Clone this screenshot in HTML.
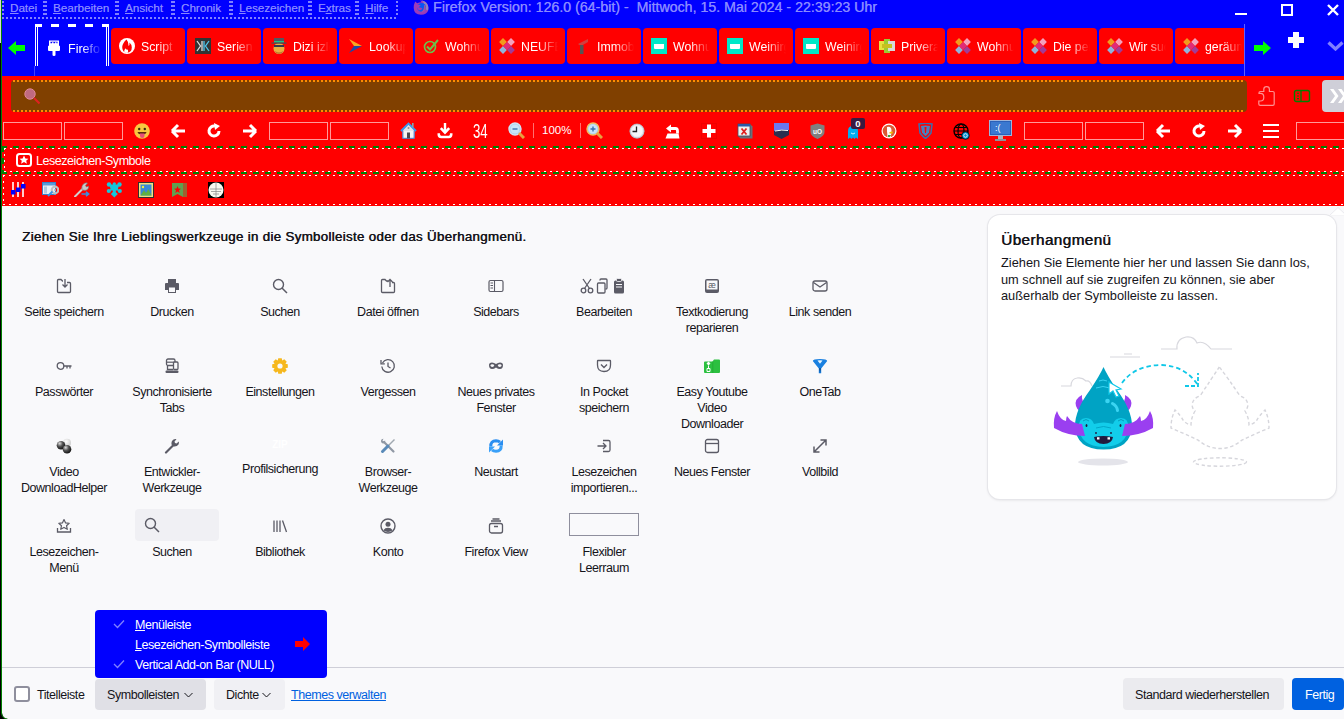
<!DOCTYPE html>
<html><head><meta charset="utf-8"><title>Anpassen</title>
<style>
*{box-sizing:border-box;margin:0;padding:0}
html,body{width:1344px;height:719px;overflow:hidden;background:#f9f9fb;font-family:"Liberation Sans",sans-serif;position:relative}
.a{position:absolute}
svg{display:block}
.mi{top:1px;font-size:11.6px;color:#8888ff;white-space:nowrap;text-shadow:0.25px 0 0 rgba(136,136,255,0.7)}
#title{left:433px;top:-1px;font-size:14.2px;color:#8a8aff;white-space:nowrap;text-shadow:0.35px 0 0 rgba(138,138,255,0.8)}
.tab{position:absolute;top:28px;height:36px;background:#ff0000;overflow:hidden}
.tab .t{position:absolute;left:30px;top:12px;font-size:12.3px;color:#fff;white-space:nowrap;width:38px;overflow:hidden;-webkit-mask-image:linear-gradient(to right,#000 0,#000 17px,rgba(0,0,0,0) 37px)}
.tab .ic{position:absolute;left:8px;top:10px;width:16px;height:16px}
.lbl{position:absolute;width:108px;text-align:center;font-size:12.5px;letter-spacing:-0.45px;line-height:16px;color:#15141a}
.ui{font-size:12.5px;letter-spacing:-0.45px;white-space:nowrap}
</style></head><body>
<div class="a" style="left:0;top:0;width:1344px;height:76px;background:#0000ff"></div>
<div class="a" style="left:0;top:76px;width:1344px;height:130px;background:#ff0000"></div>
<div class="a" style="left:2px;top:17px;width:396px;height:2px;background-image:linear-gradient(to right,#8080ff 2px,transparent 2px);background-size:4px 2px"></div>
<div class="a" style="left:2px;top:1px;width:2px;height:16px;background-image:linear-gradient(to bottom,#8080ff 2px,transparent 2px);background-size:2px 4px"></div>
<div class="a" style="left:43px;top:1px;width:4px;height:16px;background-image:linear-gradient(to bottom,#8080ff 2px,transparent 2px);background-size:4px 4px"></div>
<div class="a" style="left:115px;top:1px;width:4px;height:16px;background-image:linear-gradient(to bottom,#8080ff 2px,transparent 2px);background-size:4px 4px"></div>
<div class="a" style="left:171px;top:1px;width:4px;height:16px;background-image:linear-gradient(to bottom,#8080ff 2px,transparent 2px);background-size:4px 4px"></div>
<div class="a" style="left:229px;top:1px;width:4px;height:16px;background-image:linear-gradient(to bottom,#8080ff 2px,transparent 2px);background-size:4px 4px"></div>
<div class="a" style="left:308px;top:1px;width:4px;height:16px;background-image:linear-gradient(to bottom,#8080ff 2px,transparent 2px);background-size:4px 4px"></div>
<div class="a" style="left:355px;top:1px;width:4px;height:16px;background-image:linear-gradient(to bottom,#8080ff 2px,transparent 2px);background-size:4px 4px"></div>
<div class="a" style="left:396px;top:1px;width:2px;height:16px;background-image:linear-gradient(to bottom,#8080ff 2px,transparent 2px);background-size:2px 4px"></div>
<div class="a mi" style="left:10px"><u>D</u>atei</div>
<div class="a mi" style="left:53px"><u>B</u>earbeiten</div>
<div class="a mi" style="left:125px"><u>A</u>nsicht</div>
<div class="a mi" style="left:181px"><u>C</u>hronik</div>
<div class="a mi" style="left:239px"><u>L</u>esezeichen</div>
<div class="a mi" style="left:318px">E<u>x</u>tras</div>
<div class="a mi" style="left:365px"><u>H</u>ilfe</div>
<svg class="a" style="left:413px;top:0px" width="16" height="16" viewBox="0 0 16 16">
<path d="M2.2 1.5L4.2 3.2Q6 2.2 8.5 2.2L7.2 0.5Q12.5 0.5 14.5 4.5Q16 7.5 15.3 10Q14 14.8 8 14.8Q1 14.8 0.7 8Q0.6 4.5 2.2 1.5Z" fill="#9c3cb8"/>
<path d="M9 0.5Q13.5 1.5 15 5.5Q15.8 8 15 10.5L12 9Q12.5 5 9 0.5Z" fill="#9484bc"/>
<circle cx="8.6" cy="7.4" r="4.4" fill="#0656f8"/>
<path d="M3.8 5Q6.2 4 7.8 5.8Q6 6.2 5.6 7.6Q8 7 9.5 8.6Q8.5 10.5 6 10.2Q4 9.5 3.8 5Z" fill="#a03cb4"/>
<path d="M11 4.5Q13.5 6.5 12.5 10Q11 12.5 8 12.2Q11.5 10.5 11 4.5Z" fill="#a050a8"/>
</svg>
<div class="a" id="title">Firefox Version: 126.0 (64-bit) -&nbsp; Mittwoch, 15. Mai 2024 - 22:39:23 Uhr</div>
<div class="a" style="left:1235px;top:13px;width:12px;height:2px;background:#fff"></div>
<div class="a" style="left:1281px;top:4px;width:12px;height:12px;border:2px solid #fff"></div>
<svg class="a" style="left:1327px;top:4px" width="12" height="12" viewBox="0 0 12 12"><path d="M1 1L11 11M11 1L1 11" stroke="#fff" stroke-width="2.4"/></svg>
<div class="a" style="left:35px;top:24px;width:1px;height:42px;background:#fff"></div>
<div class="a" style="left:37px;top:27px;width:1px;height:39px;background:#fff"></div>
<div class="a" style="left:108px;top:24px;width:1px;height:42px;background:#fff"></div>
<div class="a" style="left:106px;top:27px;width:1px;height:39px;background:#fff"></div>
<div class="a" style="left:35px;top:24px;width:7px;height:3px;background:#fff"></div>
<div class="a" style="left:51px;top:24px;width:8px;height:3px;background:#fff"></div>
<div class="a" style="left:68px;top:24px;width:8px;height:3px;background:#fff"></div>
<div class="a" style="left:85px;top:24px;width:8px;height:3px;background:#fff"></div>
<div class="a" style="left:102px;top:24px;width:7px;height:3px;background:#fff"></div>
<div class="a" style="left:34px;top:66px;width:1px;height:10px;background:#4040ff"></div>
<svg class="a" style="left:48px;top:40px" width="12" height="16" viewBox="0 0 12 16"><path d="M1 0.5H11V6H1Z M1 5.5H11Q12 5.5 12 6.5V10Q12 11 11 11H1Q0 11 0 10V6.5Q0 5.5 1 5.5Z M4.5 11H7.5V15Q7.5 16 6 16Q4.5 16 4.5 15Z" fill="#fff"/><path d="M2.5 1.8V3.2H4V2.2H5.5V3.2H7V2.2H8.5V3.2H9.5V1.8" fill="#0000ff"/></svg>
<div class="a" style="left:68px;top:42px;font-size:12.5px;color:#fff;white-space:nowrap;width:32px;overflow:hidden;-webkit-mask-image:linear-gradient(to right,#000 0,#000 14px,rgba(0,0,0,0.1) 32px)">Firefox Version</div>
<div class="tab" style="left:111px;width:74px;border-radius:4px"><div class="ic"><svg width="16" height="16" viewBox="0 0 16 16"><circle cx="8" cy="8" r="8" fill="#fff"/><path d="M7.5 1.5Q3.5 5 3.2 9Q3.2 14.5 8 14.8Q12.8 14.5 12.8 9.5Q12.8 6.5 10.5 4.5Q10.8 7 9.6 8Q9.8 4 7.5 1.5Z" fill="#ff0000"/><path d="M5.2 14.5Q4.8 11.5 6.8 10.2Q6.8 12 8.8 11.6Q9.6 13.5 8.5 15Z" fill="#fff"/></svg></div><div class="t">Script</div></div>
<div class="tab" style="left:187px;width:74px;border-radius:4px"><div class="ic"><svg width="16" height="16" viewBox="0 0 16 16"><rect width="16" height="16" fill="#333"/><path d="M7 3V13M2 3L5.5 8L2 13" stroke="#ddd" stroke-width="1.3" fill="none"/><path d="M9 3V13M14 3L10.5 8L14 13" stroke="#4ec8ee" stroke-width="1.3" fill="none"/></svg></div><div class="t">Serien</div></div>
<div class="tab" style="left:263px;width:74px;border-radius:4px"><div class="ic"><svg width="16" height="16" viewBox="0 0 16 16"><ellipse cx="8" cy="10.5" rx="5.5" ry="5.5" fill="#e8b040"/><path d="M4 13Q8 16 12 13Q11 15.8 8 15.8Q5 15.8 4 13Z" fill="#b07030"/><rect x="3" y="0" width="10" height="4.5" fill="#505860"/><rect x="3" y="3" width="10" height="1.6" fill="#20c08a"/><rect x="0.5" y="4.5" width="15" height="1.2" fill="#405058"/><rect x="3" y="7" width="10" height="2" fill="#303850"/></svg></div><div class="t">Dizi izle</div></div>
<div class="tab" style="left:339px;width:74px;border-radius:4px"><div class="ic"><svg width="16" height="16" viewBox="0 0 16 16"><path d="M2 1L15 8L7 8Z" fill="#f7a823"/><path d="M7 8L15 8L2 15Z" fill="#1e4aa8"/><path d="M2 1L7 8L2 15" fill="#f2c94c" opacity="0"/></svg></div><div class="t">Lookup</div></div>
<div class="tab" style="left:415px;width:74px;border-radius:4px"><div class="ic"><svg width="16" height="16" viewBox="0 0 16 16"><circle cx="7" cy="9" r="5.5" stroke="#6cc04a" stroke-width="1.6" fill="none"/><path d="M4 8.5L7 11.5L15 2" stroke="#6cc04a" stroke-width="2" fill="none"/></svg></div><div class="t">Wohnung</div></div>
<div class="tab" style="left:491px;width:74px;border-radius:4px"><div class="ic"><svg width="16" height="16" viewBox="0 0 16 16"><path d="M4 0.10000000000000009L7.9 4L4 7.9L0.10000000000000009 4Z" fill="#f29a1d"/><path d="M12 0.10000000000000009L15.9 4L12 7.9L8.1 4Z" fill="#f4a0bc"/><path d="M4 8.1L7.9 12L4 15.9L0.10000000000000009 12Z" fill="#90b4dc"/><path d="M12 8.1L15.9 12L12 15.9L8.1 12Z" fill="#a03c98"/><path d="M8 4.1L11.9 8L8 11.9L4.1 8Z" fill="#e02a78"/></svg></div><div class="t">NEUFERT</div></div>
<div class="tab" style="left:567px;width:74px;border-radius:4px"><div class="ic"><svg width="16" height="16" viewBox="0 0 16 16"><path d="M3 6L13 1V4L6 8Z" fill="#d04040"/><rect x="5" y="7" width="3.5" height="9" fill="#555"/></svg></div><div class="t">Immobilien</div></div>
<div class="tab" style="left:643px;width:74px;border-radius:4px"><div class="ic"><svg width="16" height="16" viewBox="0 0 16 16"><rect width="16" height="16" fill="#00e8c8"/><path d="M3 6H13V10Q13 11 12 11H4Q3 11 3 10Z" fill="#fff"/></svg></div><div class="t">Wohnung</div></div>
<div class="tab" style="left:719px;width:74px;border-radius:4px"><div class="ic"><svg width="16" height="16" viewBox="0 0 16 16"><rect width="16" height="16" fill="#00e8c8"/><path d="M3 6H13V10Q13 11 12 11H4Q3 11 3 10Z" fill="#fff"/></svg></div><div class="t">Weinirgendwas</div></div>
<div class="tab" style="left:795px;width:74px;border-radius:4px"><div class="ic"><svg width="16" height="16" viewBox="0 0 16 16"><rect width="16" height="16" fill="#00e8c8"/><path d="M3 6H13V10Q13 11 12 11H4Q3 11 3 10Z" fill="#fff"/></svg></div><div class="t">Weinirgendwas</div></div>
<div class="tab" style="left:871px;width:74px;border-radius:4px"><div class="ic"><svg width="16" height="16" viewBox="0 0 16 16"><rect x="0" y="3" width="6" height="9" fill="#e8e040"/><rect x="5" y="1" width="6" height="14" fill="#9acd32"/><rect x="9" y="3" width="7" height="10" fill="#d8d8d8"/><rect x="3" y="6" width="10" height="4" fill="#c8c020"/></svg></div><div class="t">Privera</div></div>
<div class="tab" style="left:947px;width:74px;border-radius:4px"><div class="ic"><svg width="16" height="16" viewBox="0 0 16 16"><path d="M4 0.10000000000000009L7.9 4L4 7.9L0.10000000000000009 4Z" fill="#f29a1d"/><path d="M12 0.10000000000000009L15.9 4L12 7.9L8.1 4Z" fill="#f4a0bc"/><path d="M4 8.1L7.9 12L4 15.9L0.10000000000000009 12Z" fill="#90b4dc"/><path d="M12 8.1L15.9 12L12 15.9L8.1 12Z" fill="#a03c98"/><path d="M8 4.1L11.9 8L8 11.9L4.1 8Z" fill="#e02a78"/></svg></div><div class="t">Wohnung</div></div>
<div class="tab" style="left:1023px;width:74px;border-radius:4px"><div class="ic"><svg width="16" height="16" viewBox="0 0 16 16"><path d="M4 0.10000000000000009L7.9 4L4 7.9L0.10000000000000009 4Z" fill="#f29a1d"/><path d="M12 0.10000000000000009L15.9 4L12 7.9L8.1 4Z" fill="#f4a0bc"/><path d="M4 8.1L7.9 12L4 15.9L0.10000000000000009 12Z" fill="#90b4dc"/><path d="M12 8.1L15.9 12L12 15.9L8.1 12Z" fill="#a03c98"/><path d="M8 4.1L11.9 8L8 11.9L4.1 8Z" fill="#e02a78"/></svg></div><div class="t">Die perfekte</div></div>
<div class="tab" style="left:1099px;width:74px;border-radius:4px"><div class="ic"><svg width="16" height="16" viewBox="0 0 16 16"><path d="M4 0.10000000000000009L7.9 4L4 7.9L0.10000000000000009 4Z" fill="#f29a1d"/><path d="M12 0.10000000000000009L15.9 4L12 7.9L8.1 4Z" fill="#f4a0bc"/><path d="M4 8.1L7.9 12L4 15.9L0.10000000000000009 12Z" fill="#90b4dc"/><path d="M12 8.1L15.9 12L12 15.9L8.1 12Z" fill="#a03c98"/><path d="M8 4.1L11.9 8L8 11.9L4.1 8Z" fill="#e02a78"/></svg></div><div class="t">Wir suchen</div></div>
<div class="tab" style="left:1175px;width:69px;border-radius:4px 0 0 4px"><div class="ic"><svg width="16" height="16" viewBox="0 0 16 16"><path d="M4 0.10000000000000009L7.9 4L4 7.9L0.10000000000000009 4Z" fill="#f29a1d"/><path d="M12 0.10000000000000009L15.9 4L12 7.9L8.1 4Z" fill="#f4a0bc"/><path d="M4 8.1L7.9 12L4 15.9L0.10000000000000009 12Z" fill="#90b4dc"/><path d="M12 8.1L15.9 12L12 15.9L8.1 12Z" fill="#a03c98"/><path d="M8 4.1L11.9 8L8 11.9L4.1 8Z" fill="#e02a78"/></svg></div><div class="t">geräumig</div></div>
<div class="a" style="left:1244px;top:24px;width:1px;height:52px;background:#6060ff"></div>
<svg class="a" style="left:8px;top:41px" width="17" height="14" viewBox="0 0 17 14"><path d="M0 7L8 0V4H17V10H8V14Z" fill="#00ff00"/></svg>
<svg class="a" style="left:1254px;top:41px" width="17" height="14" viewBox="0 0 17 14"><path d="M17 7L9 0V4H0V10H9V14Z" fill="#00ff00"/></svg>
<svg class="a" style="left:1288px;top:32px" width="16" height="16" viewBox="0 0 16 16"><path d="M5 0H11V5H16V11H11V16H5V11H0V5H5Z" fill="#fff"/></svg>
<svg class="a" style="left:1327px;top:41px" width="17" height="10" viewBox="0 0 17 10"><path d="M1.5 1.5L8.5 8L15.5 1.5" stroke="#8080ff" stroke-width="3.2" fill="none"/></svg>
<div class="a" style="left:11px;top:80px;width:1236px;height:32px;background:#804000;border-radius:4px"></div>
<div class="a" style="left:13px;top:80px;width:1232px;height:2px;background-image:linear-gradient(to right,#ff8c00 2px,transparent 2px);background-size:4px 2px"></div>
<div class="a" style="left:13px;top:110px;width:1232px;height:2px;background-image:linear-gradient(to right,#ff8c00 2px,transparent 2px);background-size:4px 2px"></div>
<svg class="a" style="left:24px;top:88px" width="17" height="17" viewBox="0 0 17 17"><circle cx="6" cy="6" r="5.2" fill="#c06a80" stroke="#e08898" stroke-width="1"/><path d="M10 10L15.5 15.5" stroke="#e02020" stroke-width="2"/></svg>
<svg class="a" style="left:1258px;top:86px" width="17" height="20" viewBox="0 0 17 20"><path d="M1 6.8Q1 5.5 2.3 5.5H5.8V3.2Q5.8 0.6 8.6 0.6Q11.4 0.6 11.4 3.2V5.5H14.8Q16.2 5.5 16.2 6.8V18Q16.2 19.3 14.8 19.3H2.2Q0.8 19.3 0.8 18V15H2.5Q5.8 15 5.8 11.2Q5.8 7.4 2.5 7.4H1Z" stroke="#ff9090" stroke-width="1.2" fill="none"/></svg>
<svg class="a" style="left:1293px;top:89px" width="18" height="14" viewBox="0 0 18 14"><rect x="1.5" y="1.5" width="15" height="11" rx="1.8" stroke="#008000" stroke-width="1.4" fill="none"/><path d="M8 1.5V12.5" stroke="#008000" stroke-width="1.3"/><path d="M4 4.3H6M4 7H6M4 9.6H6" stroke="#008000" stroke-width="1.1"/></svg>
<div class="a" style="left:1322px;top:80px;width:30px;height:32px;background:#cfcfd8;border-radius:4px"></div>
<svg class="a" style="left:1329px;top:88px" width="15" height="16" viewBox="0 0 15 16"><path d="M1 1H4.5L9.5 8L4.5 15H1L6 8Z M9 1H12.5L17.5 8L12.5 15H9L14 8Z" fill="#fff"/></svg>
<div class="a" style="left:3px;top:122px;width:59px;height:18px;border:1px solid #ff9a9a"></div>
<div class="a" style="left:64px;top:122px;width:59px;height:18px;border:1px solid #ff9a9a"></div>
<div class="a" style="left:269px;top:122px;width:59px;height:18px;border:1px solid #ff9a9a"></div>
<div class="a" style="left:330px;top:122px;width:59px;height:18px;border:1px solid #ff9a9a"></div>
<div class="a" style="left:1024px;top:122px;width:59px;height:18px;border:1px solid #ff9a9a"></div>
<div class="a" style="left:1085px;top:122px;width:59px;height:18px;border:1px solid #ff9a9a"></div>
<div class="a" style="left:1296px;top:122px;width:59px;height:18px;border:1px solid #ff9a9a"></div>
<svg class="a" style="left:170px;top:123px" width="16" height="16" viewBox="0 0 16 16"><path d="M2 8L8 2M2 8L8 14M2 8H15" stroke="#fff" stroke-width="3" fill="none" stroke-linejoin="miter"/></svg>
<svg class="a" style="left:1155px;top:123px" width="16" height="16" viewBox="0 0 16 16"><path d="M2 8L8 2M2 8L8 14M2 8H15" stroke="#fff" stroke-width="3" fill="none" stroke-linejoin="miter"/></svg>
<svg class="a" style="left:206px;top:123px" width="16" height="16" viewBox="0 0 16 16"><path d="M13 8A5 5 0 1 1 9 3.1" stroke="#fff" stroke-width="3" fill="none"/><path d="M8 0L14 3L9 7Z" fill="#fff"/></svg>
<svg class="a" style="left:1191px;top:123px" width="16" height="16" viewBox="0 0 16 16"><path d="M13 8A5 5 0 1 1 9 3.1" stroke="#fff" stroke-width="3" fill="none"/><path d="M8 0L14 3L9 7Z" fill="#fff"/></svg>
<svg class="a" style="left:242px;top:123px" width="16" height="16" viewBox="0 0 16 16"><path d="M14 8L8 2M14 8L8 14M14 8H1" stroke="#fff" stroke-width="3" fill="none"/></svg>
<svg class="a" style="left:1227px;top:123px" width="16" height="16" viewBox="0 0 16 16"><path d="M14 8L8 2M14 8L8 14M14 8H1" stroke="#fff" stroke-width="3" fill="none"/></svg>
<svg class="a" style="left:134px;top:123px" width="16" height="16" viewBox="0 0 16 16"><circle cx="8" cy="8" r="7.8" fill="#f8c840"/><circle cx="5.2" cy="6" r="1.2" fill="#3a2a10"/><circle cx="10.8" cy="6" r="1.2" fill="#3a2a10"/><path d="M3.5 9H12.5Q12 11.5 8 11.5Q4 11.5 3.5 9Z" fill="#5a2a10"/><path d="M6 10.5H10.5V13Q10.5 15 8.2 15Q6 15 6 13Z" fill="#e85078"/></svg>
<svg class="a" style="left:400px;top:122px" width="17" height="17" viewBox="0 0 17 17"><path d="M2.5 8L8.5 2L14.5 8V16.5H2.5Z" fill="#e4e4e6"/><path d="M4 9H13V16H4Z" fill="#f4f4f4"/><path d="M1 9L8.5 1.5L16 9" stroke="#3898f0" stroke-width="1.8" fill="none"/><path d="M2.8 8.5V16.3H14.2V8.5" stroke="#2a80e0" stroke-width="0.9" fill="none"/><rect x="7" y="10.5" width="3" height="5.8" fill="#4a4a4e"/><rect x="12" y="1" width="1.6" height="4.5" fill="#80a8b0"/><circle cx="8.5" cy="6" r="1" fill="#909090"/></svg>
<svg class="a" style="left:437px;top:122px" width="16" height="17" viewBox="0 0 16 17"><path d="M8 1V10.5" stroke="#fff" stroke-width="2.4"/><path d="M3.8 6.2L8 10.6L12.2 6.2" stroke="#fff" stroke-width="2.6" fill="none"/><path d="M1.8 11.2V12.6Q1.8 15 4.2 15H11.8Q14.2 15 14.2 12.6V11.2" stroke="#fff" stroke-width="2.6" fill="none"/></svg>
<div class="a" style="left:473px;top:120px;font-size:20px;color:#fff;white-space:nowrap;transform:scaleX(0.66);transform-origin:0 0;line-height:22px">34</div>
<svg class="a" style="left:508px;top:122px" width="17" height="17" viewBox="0 0 17 17"><circle cx="7" cy="7" r="6" fill="#a8d0f0" stroke="#d0e4f4" stroke-width="1.4"/><circle cx="7" cy="7" r="4.5" fill="#c8e4f8"/><path d="M11 11L16 16" stroke="#e8a040" stroke-width="3"/><path d="M4.5 7H9.5" stroke="#3a70b0" stroke-width="1.4"/></svg>
<svg class="a" style="left:586px;top:122px" width="17" height="17" viewBox="0 0 17 17"><circle cx="7" cy="7" r="6" fill="#a8d0f0" stroke="#f0c060" stroke-width="1.4"/><circle cx="7" cy="7" r="4.5" fill="#c8e4f8"/><path d="M11 11L16 16" stroke="#e8a040" stroke-width="3"/><path d="M4.5 7H9.5M7 4.5V9.5" stroke="#3a70b0" stroke-width="1.4"/></svg>
<div class="a" style="left:533px;top:123px;width:1px;height:15px;background:#ff7070"></div>
<div class="a" style="left:580px;top:123px;width:1px;height:15px;background:#ff7070"></div>
<div class="a" style="left:542px;top:124px;font-size:11.5px;color:#fff;white-space:nowrap">100%</div>
<svg class="a" style="left:629px;top:123px" width="16" height="16" viewBox="0 0 16 16"><circle cx="8" cy="8.3" r="7.3" fill="#a0a0a8"/><circle cx="8" cy="8" r="7" fill="#e4e6ec" stroke="#b8bcc8" stroke-width="0.8"/><circle cx="8" cy="8" r="5.5" fill="#f4f6fa"/><path d="M7.5 3.5V8.5H3.5" stroke="#222" stroke-width="1.3" fill="none"/></svg>
<svg class="a" style="left:665px;top:123px" width="15" height="16" viewBox="0 0 15 16"><path d="M5 5.5H10.5Q12.5 5.5 12.5 8V10.5" stroke="#fff" stroke-width="2.8" fill="none"/><path d="M1 5.5L6 1.5V9.5Z" fill="#fff"/><path d="M2.5 10.5H13.5L14.5 15.5H0.5Z" fill="#fff"/></svg>
<svg class="a" style="left:701px;top:123px" width="16" height="16" viewBox="0 0 16 16"><rect x="0.5" y="0.5" width="15" height="15" fill="none" stroke="#c80000" stroke-opacity="0.6" stroke-width="1" stroke-dasharray="1 1"/><path d="M6 1.5H10V6H14.5V10H10V14.5H6V10H1.5V6H6Z" fill="#fff"/></svg>
<svg class="a" style="left:737px;top:123px" width="16" height="16" viewBox="0 0 16 16"><path d="M13 1L15.5 3.5V15.5H3.5L1 13Z" fill="#6a7078"/><rect x="1" y="1" width="12" height="12" fill="#f0f0f0" stroke="#404a60" stroke-width="0.8"/><rect x="1" y="1" width="12" height="2.5" fill="#2a5aa8"/><path d="M4.5 5.5L9.5 11.5M9.5 5.5L4.5 11.5" stroke="#e02020" stroke-width="1.8"/></svg>
<svg class="a" style="left:774px;top:123px" width="15" height="16" viewBox="0 0 15 16"><path d="M0 0H15V12L7.5 16L0 12Z" fill="#2a3050"/><path d="M0 0H15V7Q7 6 0 8Z" fill="#6a78f0"/><path d="M1 8Q8 6.5 14 7.5" stroke="#fff" stroke-width="1"/></svg>
<svg class="a" style="left:810px;top:123px" width="15" height="16" viewBox="0 0 15 16"><path d="M7.5 0.5L14.5 2.5V9Q14.5 13 7.5 16Q0.5 13 0.5 9V2.5Z" fill="#808080"/><text x="7.5" y="10.5" font-size="6.5" font-weight="bold" fill="#fff" text-anchor="middle" font-family="Liberation Sans">uO</text></svg>
<svg class="a" style="left:846px;top:125px" width="14" height="14" viewBox="0 0 14 14"><path d="M2 14V6Q2 1 7 1Q12 1 12 6V14L10 12.5L8.5 14L7 12.5L5.5 14L4 12.5Z" fill="#00aef0"/><path d="M5 8Q7 10 9 8" stroke="#fff" stroke-width="0.8" fill="none"/></svg>
<div class="a" style="left:851px;top:118px;width:14px;height:11px;background:#3a1a40;border-radius:2px;color:#fff;font-size:9.5px;font-weight:bold;text-align:center;line-height:11px">0</div>
<svg class="a" style="left:881px;top:123px" width="16" height="16" viewBox="0 0 16 16"><circle cx="8" cy="8" r="7.5" fill="#fff"/><circle cx="8" cy="8" r="6.3" fill="#de5833"/><path d="M6 4Q10 3 10.5 7L10 14Q8 15 6.5 14L6 8Z" fill="#fff"/><path d="M8.5 9L12 8.5L11.5 10.5L8.5 10.5Z" fill="#f0c000"/><path d="M7 12L10 12L9 14L7 14Z" fill="#40a040"/></svg>
<svg class="a" style="left:918px;top:123px" width="15" height="16" viewBox="0 0 15 16"><path d="M1 1Q7.5 -0.5 14 1L13 10Q10 14 7.5 15.5Q5 14 2 10Z" fill="none" stroke="#3a70b0" stroke-width="1.5"/><path d="M3 3Q7.5 2 12 3L11 9.5Q9 12 7.5 13Q6 12 4 9.5Z" fill="#4a80c0"/><path d="M6.5 4H8.5L8 10H7Z" fill="#ff0000"/></svg>
<svg class="a" style="left:953px;top:123px" width="17" height="17" viewBox="0 0 17 17"><circle cx="8" cy="8" r="7" fill="none" stroke="#000" stroke-width="1.4"/><ellipse cx="8" cy="8" rx="3" ry="7" fill="none" stroke="#000" stroke-width="1.2"/><path d="M1 8H15M2.5 4.5H13.5M2.5 11.5H13.5" stroke="#000" stroke-width="1.1"/><circle cx="12.5" cy="12.5" r="3.8" fill="#0090d0" stroke="#000" stroke-width="0.8"/><circle cx="12.5" cy="12.5" r="1.8" fill="none" stroke="#fff" stroke-width="0.8"/></svg>
<svg class="a" style="left:989px;top:120px" width="23" height="22" viewBox="0 0 23 22"><rect x="0.5" y="0.5" width="22" height="15" fill="#2a60b8" stroke="#a0b4d8" stroke-width="1"/><rect x="2" y="2" width="19" height="12" fill="#3a78d0"/><text x="6" y="11" font-size="9" fill="#fff" font-family="Liberation Sans">:(</text><rect x="9" y="16" width="5" height="3" fill="#b0b0b8"/><rect x="6" y="19" width="11" height="2" fill="#909098"/></svg>
<svg class="a" style="left:1263px;top:123px" width="16" height="16" viewBox="0 0 16 16"><path d="M0 2H16M0 8H16M0 14H16" stroke="#fff" stroke-width="2.2"/></svg>
<div class="a" style="left:1px;top:146px;width:1343px;height:2px;background-image:linear-gradient(to right,#008000 6px,transparent 6px);background-size:12px 2px"></div>
<div class="a" style="left:4px;top:148px;width:1340px;height:1px;background-image:linear-gradient(to right,#fff 2px,transparent 2px);background-size:6px 1px"></div>
<div class="a" style="left:4px;top:171px;width:1340px;height:1px;background-image:linear-gradient(to right,#fff 2px,transparent 2px);background-size:6px 1px"></div>
<div class="a" style="left:1px;top:172px;width:1343px;height:2px;background-image:linear-gradient(to right,#008000 6px,transparent 6px);background-size:12px 2px"></div>
<div class="a" style="left:2px;top:146px;width:2px;height:28px;background-image:linear-gradient(to bottom,#008000 6px,transparent 6px);background-size:2px 12px"></div>
<div class="a" style="left:4px;top:148px;width:1px;height:24px;background-image:linear-gradient(to bottom,#fff 2px,transparent 2px);background-size:1px 6px"></div>
<svg class="a" style="left:16px;top:153px" width="16" height="14" viewBox="0 0 16 14"><rect x="1" y="1" width="14" height="12" rx="2.5" fill="none" stroke="#fff" stroke-width="2"/><path d="M8 2.6L9.4 5.4L12.4 5.7L10.2 7.7L10.9 10.7L8 9.1L5.1 10.7L5.8 7.7L3.6 5.7L6.6 5.4Z" fill="#fff"/></svg>
<div class="a" style="left:36px;top:154px;font-size:12.5px;letter-spacing:-0.45px;color:#fff;white-space:nowrap">Lesezeichen-Symbole</div>
<div class="a" style="left:3px;top:175px;width:1341px;height:1px;background-image:linear-gradient(to right,#fff 2px,transparent 2px);background-size:6px 1px"></div>
<div class="a" style="left:3px;top:204px;width:1341px;height:1px;background-image:linear-gradient(to right,#fff 2px,transparent 2px);background-size:6px 1px"></div>
<div class="a" style="left:3px;top:175px;width:1px;height:30px;background-image:linear-gradient(to bottom,#fff 2px,transparent 2px);background-size:1px 6px"></div>
<svg class="a" style="left:11px;top:182px" width="15" height="15" viewBox="0 0 15 15"><path d="M2 0V15M7 0V15M12 0V15" stroke="#fff" stroke-width="1.6"/><rect x="0" y="8" width="4.5" height="4.5" fill="#0000ff"/><rect x="5" y="5.5" width="4.5" height="4.5" fill="#0000ff"/><rect x="10" y="2" width="4.5" height="4.5" fill="#0000ff"/></svg>
<svg class="a" style="left:42px;top:182px" width="17" height="15" viewBox="0 0 17 15"><rect x="0.5" y="0.5" width="13" height="12" fill="#e8f0f8" stroke="#3a80c8" stroke-width="1"/><rect x="1" y="1" width="12" height="2.5" fill="#5a9ad8"/><rect x="2" y="4.5" width="3" height="7" fill="#b0c8e0"/><circle cx="13" cy="8" r="3.3" fill="none" stroke="#c0c0c0" stroke-width="2.2"/><circle cx="13" cy="8" r="1" fill="#b8b8b8"/><path d="M6 14L10.5 9.5" stroke="#3a90e0" stroke-width="2"/></svg>
<svg class="a" style="left:74px;top:182px" width="16" height="15" viewBox="0 0 16 15"><path d="M1 14.5L9.5 6" stroke="#d0d0d0" stroke-width="2" stroke-linecap="round"/><path d="M8 7.5Q7 3.5 10 1.5Q12 0.5 13.5 1L11.5 3.5L12.5 5L14.5 4Q15 6 13.5 7.5Q11.5 9 8.5 8Z" fill="#c8c8c8" stroke="#707070" stroke-width="0.6"/><path d="M7.5 12H14M12 9.8L14.6 12L12 14.2" stroke="#3a90e0" stroke-width="1.6" fill="none"/></svg>
<svg class="a" style="left:106px;top:182px" width="17" height="16" viewBox="0 0 17 16"><g fill="#12c8dc"><circle cx="3" cy="2.5" r="2.2"/><circle cx="13.5" cy="2.5" r="2.2"/><circle cx="2.8" cy="9" r="2.1"/><circle cx="13.8" cy="9" r="2.1"/><circle cx="8.3" cy="1.8" r="1.6"/><path d="M3.5 3.5L5 2.5H11.5L13 3.5L12 6.5L13 9L11 8.5H5.5L3.5 9L4.5 6.5Z"/><rect x="6.8" y="8" width="3" height="3"/><path d="M4.8 12L8.3 8.8L11.8 12L8.3 15.6Z"/></g></svg>
<svg class="a" style="left:138px;top:182px" width="16" height="16" viewBox="0 0 16 16"><rect x="0.5" y="0.5" width="15" height="15" fill="#f0e080" stroke="#303030" stroke-width="1"/><rect x="2.5" y="2.5" width="11" height="11" fill="#3a88d8"/><path d="M2.5 13.5L6 8L8 11L10.5 7L13.5 13.5Z" fill="#60b040"/><circle cx="5" cy="5" r="1.2" fill="#f0f040"/></svg>
<svg class="a" style="left:172px;top:182px" width="16" height="16" viewBox="0 0 16 16"><path d="M0 1H11V15L5.5 12L0 15Z" fill="#60a050"/><path d="M5.5 4L6.5 6.5L9 6.7L7 8.3L7.7 11L5.5 9.5L3.3 11L4 8.3L2 6.7L4.5 6.5Z" fill="#ff0000"/><path d="M12 1V15M14 1V15" stroke="#60a050" stroke-width="1.2"/></svg>
<svg class="a" style="left:208px;top:182px" width="16" height="16" viewBox="0 0 16 16"><rect width="16" height="16" fill="#000"/><circle cx="8" cy="8" r="7.5" fill="#f8f8f0"/><path d="M2 7H14M3 9.5H13M5 12H11M8 1V15" stroke="#909090" stroke-width="0.8"/></svg>
<div class="a" style="left:22px;top:229px;font-size:13.3px;letter-spacing:0.32px;text-shadow:0.45px 0 0 #15141a;color:#15141a;white-space:nowrap">Ziehen Sie Ihre Lieblingswerkzeuge in die Symbolleiste oder das Überhangmenü.</div>
<svg class="a" style="left:56px;top:278px" width="16" height="16" viewBox="0 0 16 16"><path d="M1.5 4.5V13.5Q1.5 14.5 2.5 14.5H13.5Q14.5 14.5 14.5 13.5V5.5Q14.5 4.5 13.5 4.5H11M1.5 4.5V2.5Q1.5 1.5 2.5 1.5H5L6.5 3H7" stroke="#5b5b66" stroke-width="1.3" fill="none"/><path d="M9 1V9M6.5 6.5L9 9L11.5 6.5" stroke="#5b5b66" stroke-width="1.3" fill="none"/></svg>
<div class="lbl" style="left:10px;top:304px">Seite speichern</div>
<svg class="a" style="left:164px;top:278px" width="16" height="16" viewBox="0 0 16 16"><path d="M4 1H12V5H4Z M1 6Q1 5 2 5H14Q15 5 15 6V12H12V15H4V12H1Z" fill="#5b5b66"/><rect x="5" y="9.5" width="6" height="4.5" fill="#f9f9fb"/></svg>
<div class="lbl" style="left:118px;top:304px">Drucken</div>
<svg class="a" style="left:272px;top:278px" width="16" height="16" viewBox="0 0 16 16"><circle cx="6.5" cy="6.5" r="5" stroke="#5b5b66" stroke-width="1.4" fill="none"/><path d="M10 10L15 15" stroke="#5b5b66" stroke-width="1.5"/></svg>
<div class="lbl" style="left:226px;top:304px">Suchen</div>
<svg class="a" style="left:380px;top:278px" width="16" height="16" viewBox="0 0 16 16"><path d="M1.5 4.5V13.5Q1.5 14.5 2.5 14.5H13.5Q14.5 14.5 14.5 13.5V5.5Q14.5 4.5 13.5 4.5H12M1.5 4.5V2.5Q1.5 1.5 2.5 1.5H5L6.5 3H8" stroke="#5b5b66" stroke-width="1.3" fill="none"/><path d="M10 9V1.5M7.5 4L10 1.5L12.5 4" stroke="#5b5b66" stroke-width="1.3" fill="none"/></svg>
<div class="lbl" style="left:334px;top:304px">Datei öffnen</div>
<svg class="a" style="left:488px;top:278px" width="16" height="16" viewBox="0 0 16 16"><rect x="1" y="2.5" width="14" height="11" rx="1.5" stroke="#5b5b66" stroke-width="1.2" fill="none"/><path d="M6.5 2.5V13.5M2.5 5H5M2.5 7.5H5M2.5 10H5" stroke="#5b5b66" stroke-width="1.1"/></svg>
<div class="lbl" style="left:442px;top:304px">Sidebars</div>
<svg class="a" style="left:580px;top:278px" width="45" height="16" viewBox="0 0 45 16"><circle cx="3.5" cy="12.5" r="2.3" stroke="#5b5b66" stroke-width="1.3" fill="none"/><circle cx="10.5" cy="12.5" r="2.3" stroke="#5b5b66" stroke-width="1.3" fill="none"/><path d="M4.5 10.5L11 1M9.5 10.5L3 1" stroke="#5b5b66" stroke-width="1.3"/><rect x="17.5" y="5" width="7.5" height="10" rx="1" stroke="#5b5b66" stroke-width="1.3" fill="none"/><path d="M20 2.5V2Q20 1 21 1H26Q27 1 27 2V10Q27 11 26 11H25.5" stroke="#5b5b66" stroke-width="1.3" fill="none"/><rect x="34" y="2.5" width="10" height="13" rx="1.5" fill="#5b5b66"/><rect x="36.5" y="0.5" width="5" height="3" rx="1" fill="#5b5b66" stroke="#f9f9fb" stroke-width="0.8"/><path d="M36 6.5H42M36 9H42" stroke="#f9f9fb" stroke-width="1"/></svg>
<div class="lbl" style="left:550px;top:304px">Bearbeiten</div>
<svg class="a" style="left:704px;top:278px" width="16" height="16" viewBox="0 0 16 16"><rect x="1" y="1" width="14" height="14" rx="2" fill="#5b5b66"/><rect x="2.5" y="2.5" width="11" height="9" fill="#f9f9fb"/><text x="8" y="9.8" font-size="8.5" fill="#5b5b66" text-anchor="middle" font-family="Liberation Sans">æ</text></svg>
<div class="lbl" style="left:658px;top:304px">Textkodierung<br>reparieren</div>
<svg class="a" style="left:812px;top:278px" width="16" height="16" viewBox="0 0 16 16"><rect x="1" y="3" width="14" height="10" rx="2" stroke="#5b5b66" stroke-width="1.3" fill="none"/><path d="M1.5 4.5L8 9L14.5 4.5" stroke="#5b5b66" stroke-width="1.3" fill="none"/></svg>
<div class="lbl" style="left:766px;top:304px">Link senden</div>
<svg class="a" style="left:56px;top:358px" width="16" height="16" viewBox="0 0 16 16"><circle cx="4.5" cy="8" r="3.3" stroke="#5b5b66" stroke-width="1.3" fill="none"/><path d="M8 8H15.5M11 8V10.5M14 8V10.5" stroke="#5b5b66" stroke-width="1.3"/></svg>
<div class="lbl" style="left:10px;top:384px">Passwörter</div>
<svg class="a" style="left:164px;top:358px" width="16" height="16" viewBox="0 0 16 16"><rect x="2.5" y="1" width="8.5" height="6.5" rx="1.5" stroke="#5b5b66" stroke-width="1.3" fill="none"/><path d="M3 4.2H10.5" stroke="#5b5b66" stroke-width="1.2"/><rect x="9.5" y="4" width="4.5" height="7.5" rx="1" fill="#f9f9fb" stroke="#5b5b66" stroke-width="1.3"/><path d="M3.5 8V11.5H9" stroke="#5b5b66" stroke-width="1.3" fill="none"/><rect x="1.5" y="12.5" width="13" height="2.5" rx="1" fill="#5b5b66"/></svg>
<div class="lbl" style="left:118px;top:384px">Synchronisierte<br>Tabs</div>
<svg class="a" style="left:272px;top:358px" width="16" height="16" viewBox="0 0 16 16"><path d="M15.81 6.25L15.81 9.75L13.46 10.24L13.44 10.27L14.76 12.29L12.29 14.76L10.27 13.44L10.24 13.46L9.75 15.81L6.25 15.81L5.76 13.46L5.73 13.44L3.71 14.76L1.24 12.29L2.56 10.27L2.54 10.24L0.19 9.75L0.19 6.25L2.54 5.76L2.56 5.73L1.24 3.71L3.71 1.24L5.73 2.56L5.76 2.54L6.25 0.19L9.75 0.19L10.24 2.54L10.27 2.56L12.29 1.24L14.76 3.71L13.44 5.73L13.46 5.76Z" fill="#f6b81e"/><circle cx="8" cy="8" r="2.6" fill="#f9f9fb"/></svg>
<div class="lbl" style="left:226px;top:384px">Einstellungen</div>
<svg class="a" style="left:380px;top:358px" width="16" height="16" viewBox="0 0 16 16"><path d="M2.5 5A6.3 6.3 0 1 1 1.8 8.5" stroke="#5b5b66" stroke-width="1.3" fill="none"/><path d="M1 2V5.8H4.8" stroke="#5b5b66" stroke-width="1.3" fill="none"/><path d="M8 4.5V8.5L10.5 10" stroke="#5b5b66" stroke-width="1.3" fill="none"/></svg>
<div class="lbl" style="left:334px;top:384px">Vergessen</div>
<svg class="a" style="left:488px;top:358px" width="16" height="16" viewBox="0 0 16 16"><path d="M1 7Q1 4.5 4 4.5Q6 4.5 8 6Q10 4.5 12 4.5Q15 4.5 15 7Q15 11 12 11Q10 11 8 9.5Q6 11 4 11Q1 11 1 7Z" fill="#5b5b66"/><ellipse cx="4.3" cy="7.6" rx="1.8" ry="1.4" fill="#f9f9fb"/><ellipse cx="11.7" cy="7.6" rx="1.8" ry="1.4" fill="#f9f9fb"/></svg>
<div class="lbl" style="left:442px;top:384px">Neues privates<br>Fenster</div>
<svg class="a" style="left:596px;top:358px" width="16" height="16" viewBox="0 0 16 16"><path d="M2 2.5H14Q14.5 2.5 14.5 3V7Q14.5 13.5 8 13.5Q1.5 13.5 1.5 7V3Q1.5 2.5 2 2.5Z" stroke="#5b5b66" stroke-width="1.3" fill="none"/><path d="M5 6.5L8 9.5L11 6.5" stroke="#5b5b66" stroke-width="1.4" fill="none"/></svg>
<div class="lbl" style="left:550px;top:384px">In Pocket<br>speichern</div>
<svg class="a" style="left:704px;top:358px" width="16" height="16" viewBox="0 0 16 16"><path d="M0 4.5Q0 3.5 1 3.5H8.5L10 1.5H15Q16 1.5 16 2.5V14Q16 15 15 15H1Q0 15 0 14Z" fill="#2cc040"/><path d="M8.8 3.5V15" stroke="#22a834" stroke-width="0.8"/><path d="M4.5 3.5L6.5 5.5L4.5 7.5L2.5 5.5Z" fill="#fff"/><path d="M4.5 7.5V10M3 10.5H6V13.5H3Z" stroke="#fff" stroke-width="1" fill="none"/></svg>
<div class="lbl" style="left:658px;top:384px">Easy Youtube<br>Video<br>Downloader</div>
<svg class="a" style="left:812px;top:358px" width="16" height="16" viewBox="0 0 16 16"><path d="M0.8 3Q0.8 1 8 1Q15.2 1 15.2 3L9.2 10.5V15.2H6.8V10.5Z" fill="#1a80e0"/><path d="M5.5 2.6Q8 2 10.5 2.6L8 5.8Z" fill="#e8f6ff"/><path d="M7 10.2L8 15.2L9 10.2Z" fill="#0a4a90"/></svg>
<div class="lbl" style="left:766px;top:384px">OneTab</div>
<svg class="a" style="left:56px;top:438px" width="16" height="16" viewBox="0 0 16 16"><defs><radialGradient id="bg1" cx="0.35" cy="0.3" r="0.75"><stop offset="0" stop-color="#ddd"/><stop offset="0.45" stop-color="#555"/><stop offset="1" stop-color="#0a0a0a"/></radialGradient><radialGradient id="bg2" cx="0.4" cy="0.35" r="0.7"><stop offset="0" stop-color="#fff"/><stop offset="1" stop-color="#c8c8c8"/></radialGradient></defs><circle cx="11" cy="4.8" r="4" fill="url(#bg2)"/><circle cx="5" cy="7.2" r="4.3" fill="url(#bg1)"/><circle cx="11" cy="11.3" r="4.3" fill="url(#bg1)"/></svg>
<div class="lbl" style="left:10px;top:464px">Video<br>DownloadHelper</div>
<svg class="a" style="left:164px;top:438px" width="16" height="16" viewBox="0 0 16 16"><path d="M2 14.5L8.5 8" stroke="#5b5b66" stroke-width="2.2" stroke-linecap="round"/><path d="M7.5 6.5Q7 3 9.5 1.5Q11 0.8 12.5 1.2L10.5 3.5L11 5L12.5 5.5L14.8 3.5Q15.2 5 14.5 6.5Q13 9 9.5 8.5Z" fill="#5b5b66"/></svg>
<div class="lbl" style="left:118px;top:464px">Entwickler-<br>Werkzeuge</div>
<svg class="a" style="left:272px;top:436px" width="16" height="16" viewBox="0 0 16 16"><text x="8" y="12" font-size="10" font-weight="bold" fill="#fff" text-anchor="middle" font-family="Liberation Sans">ZIP</text></svg>
<div class="lbl" style="left:226px;top:461px">Profilsicherung</div>
<svg class="a" style="left:380px;top:438px" width="16" height="16" viewBox="0 0 16 16"><path d="M4 4L13.5 13.5" stroke="#9098a4" stroke-width="2.2" stroke-linecap="round"/><path d="M1 3.5Q0.8 1 3.5 0.8L2.5 2.5L3.5 3.5L5.2 2.5Q5.5 5 3 5.5Q1.5 5.5 1 3.5Z" fill="#9098a4"/><path d="M14.5 1.5L8.5 7.5" stroke="#a0a8b0" stroke-width="1.5"/><path d="M8 8L2.5 13.5" stroke="#5a8ab8" stroke-width="3" stroke-linecap="round"/></svg>
<div class="lbl" style="left:334px;top:464px">Browser-<br>Werkzeuge</div>
<svg class="a" style="left:488px;top:438px" width="16" height="16" viewBox="0 0 16 16"><path d="M2.8 8.5Q2.5 3 8 2.8Q10.5 2.8 12 4.2" stroke="#2a8ef0" stroke-width="3" fill="none"/><path d="M15 1.5V7.5H9Z" fill="#2a8ef0"/><path d="M13.2 7.5Q13.5 13 8 13.2Q5.5 13.2 4 11.8" stroke="#3aa0f8" stroke-width="3" fill="none"/><path d="M1 14.5V8.5H7Z" fill="#3aa0f8"/></svg>
<div class="lbl" style="left:442px;top:464px">Neustart</div>
<svg class="a" style="left:596px;top:438px" width="16" height="16" viewBox="0 0 16 16"><path d="M7 2.5H12.5Q14 2.5 14 4V12Q14 13.5 12.5 13.5H7" stroke="#5b5b66" stroke-width="1.3" fill="none"/><path d="M1.5 8H10M7 5L10 8L7 11" stroke="#5b5b66" stroke-width="1.3" fill="none"/></svg>
<div class="lbl" style="left:550px;top:464px">Lesezeichen<br>importieren...</div>
<svg class="a" style="left:704px;top:438px" width="16" height="16" viewBox="0 0 16 16"><rect x="1.5" y="1.5" width="13" height="13" rx="2" stroke="#5b5b66" stroke-width="1.3" fill="none"/><path d="M1.5 5.5H14.5" stroke="#5b5b66" stroke-width="1.3"/></svg>
<div class="lbl" style="left:658px;top:464px">Neues Fenster</div>
<svg class="a" style="left:812px;top:438px" width="16" height="16" viewBox="0 0 16 16"><path d="M2 14L14 2M8.5 2H14V7.5M2 8.5V14H7.5" stroke="#5b5b66" stroke-width="1.5" fill="none"/></svg>
<div class="lbl" style="left:766px;top:464px">Vollbild</div>
<svg class="a" style="left:56px;top:518px" width="16" height="16" viewBox="0 0 16 16"><path d="M8 1.5L9.6 4.9L13.2 5.3L10.5 7.7L11.3 11.3L8 9.4L4.7 11.3L5.5 7.7L2.8 5.3L6.4 4.9Z" stroke="#5b5b66" stroke-width="1.2" fill="none" stroke-linejoin="round"/><path d="M1.5 10V14H14.5V10" stroke="#5b5b66" stroke-width="1.3" fill="none"/></svg>
<div class="lbl" style="left:10px;top:544px">Lesezeichen-<br>Menü</div>
<div class="a" style="left:135px;top:509px;width:84px;height:32px;background:#f0f0f4;border-radius:4px"></div>
<svg class="a" style="left:144px;top:517px" width="16" height="16" viewBox="0 0 16 16"><circle cx="6.5" cy="6.5" r="5" stroke="#5b5b66" stroke-width="1.4" fill="none"/><path d="M10 10L15 15" stroke="#5b5b66" stroke-width="1.5"/></svg>
<div class="lbl" style="left:118px;top:544px">Suchen</div>
<svg class="a" style="left:272px;top:518px" width="16" height="16" viewBox="0 0 16 16"><path d="M2 2.5V14M5 2.5V14M8 2.5V14M10.5 2.5L14.5 14" stroke="#5b5b66" stroke-width="1.3"/></svg>
<div class="lbl" style="left:226px;top:544px">Bibliothek</div>
<svg class="a" style="left:380px;top:518px" width="16" height="16" viewBox="0 0 16 16"><circle cx="8" cy="8" r="7" stroke="#5b5b66" stroke-width="1.4" fill="none"/><circle cx="8" cy="6.3" r="2.5" fill="#5b5b66"/><path d="M3.3 12.2Q5 9.8 8 9.8Q11 9.8 12.7 12.2Q11 14 8 14Q5 14 3.3 12.2Z" fill="#5b5b66"/></svg>
<div class="lbl" style="left:334px;top:544px">Konto</div>
<svg class="a" style="left:488px;top:518px" width="16" height="16" viewBox="0 0 16 16"><rect x="1.5" y="5.5" width="13" height="9.5" rx="2" stroke="#5b5b66" stroke-width="1.3" fill="none"/><path d="M3 3H13M4.5 1H11.5M6 8.5H10" stroke="#5b5b66" stroke-width="1.3"/></svg>
<div class="lbl" style="left:442px;top:544px">Firefox View</div>
<div class="a" style="left:569px;top:513px;width:70px;height:23px;border:1px solid #8f8f9d;background:#f9f9fb"></div>
<div class="lbl" style="left:550px;top:544px">Flexibler<br>Leerraum</div>
<div class="a" style="left:988px;top:215px;width:348px;height:284px;background:#fff;border-radius:12px;box-shadow:0 0 0 1px #e6e6ea,0 1px 3px rgba(0,0,0,0.12)"></div>
<svg class="a" style="left:1328px;top:207px" width="20" height="9" viewBox="0 0 20 9"><path d="M1 9L10 0.5L19 9Z" fill="#fff" stroke="#e6e6ea" stroke-width="0.8"/></svg>
<div class="a" style="left:1001px;top:231px;font-size:15.3px;letter-spacing:0.4px;text-shadow:0.5px 0 0 #15141a;color:#15141a;white-space:nowrap">Überhangmenü</div>
<div class="a" style="left:1001px;top:255px;font-size:12.8px;line-height:16.6px;color:#15141a;white-space:nowrap">Ziehen Sie Elemente hier her und lassen Sie dann los,<br>um schnell auf sie zugreifen zu können, sie aber<br>außerhalb der Symbolleiste zu lassen.</div>
<svg class="a" style="left:1050px;top:330px" width="225" height="145" viewBox="1050 330 225 145">
<g stroke="#d8d8de" stroke-width="1.2" fill="none">
<path d="M1161 349H1177Q1176 339 1186 337Q1194 336 1197 343Q1204 340 1211 349H1232"/>
<path d="M1061 386H1071Q1071 379 1077 378Q1082 377 1086 381Q1090 380 1092 386"/>
<path d="M1110 357H1140M1124 354H1132"/>
</g>
<ellipse cx="1103" cy="462" rx="25" ry="3.5" fill="#e4e4ea"/>
<g stroke="#d6d6dc" stroke-width="1.4" fill="none" stroke-dasharray="3.5 2.5">
<path d="M1219.3 367Q1212 378 1200 396Q1193 398 1192 405Q1193 410 1195 411Q1191 418 1191 425Q1186 424 1183 420Q1181 416 1175 410Q1171 418 1171 428Q1185 434 1198 440Q1208 448.5 1220 448.5Q1232 448.5 1242 440Q1255 434 1269 428Q1269 418 1265 410Q1259 416 1257 420Q1254 424 1249 425Q1249 418 1245 411Q1247 410 1248 405Q1247 398 1240 396Q1228 378 1219.3 367Z"/>
<ellipse cx="1220" cy="462" rx="26.5" ry="4.2"/>
</g>
<path d="M1082 395Q1074 399 1076 406Q1078 412 1085 413L1087 404Q1081 402 1082 395Z" fill="#9a3ff0"/>
<path d="M1125 395Q1133 399 1131 406Q1129 412 1122 413L1120 404Q1126 402 1125 395Z" fill="#9a3ff0"/>
<path d="M1103.5 367Q1100 375 1090 390Q1075 410 1075 426Q1076 449.5 1103.5 449.5Q1131 449.5 1132 426Q1132 410 1117 390Q1107 375 1103.5 367Z" fill="#00a3c4"/>
<path d="M1079 428Q1078 418 1086 418Q1092 418 1094 424Q1103.5 421 1113 424Q1115 418 1121 418Q1129 418 1128 428Q1127 446 1103.5 447Q1080 446 1079 428Z" fill="#12cdea"/>
<path d="M1054 428Q1053 418 1057 411Q1060 420 1066 421Q1066 418 1067 416Q1072 424 1082 424L1085 436Q1068 436 1054 428Z" fill="#9a3ff0"/>
<path d="M1153 428Q1154 418 1150 411Q1147 420 1141 421Q1141 418 1140 416Q1135 424 1125 424L1122 436Q1139 436 1153 428Z" fill="#9a3ff0"/>
<path d="M1094 437Q1103.5 435 1113 437Q1112 444 1103.5 444Q1095 444 1094 437Z" fill="#221a3e"/>
<path d="M1097 437.2H1099.5V439.5H1097ZM1107.5 437.2H1110V439.5H1107.5Z" fill="#fff"/>
<ellipse cx="1086.5" cy="425.5" rx="0.9" ry="1.6" fill="#221a3e"/><ellipse cx="1120.5" cy="425.5" rx="0.9" ry="1.6" fill="#221a3e"/>
<path d="M1083 421Q1086 418 1089 421M1118 421Q1121 418 1124 421" stroke="#0090b0" stroke-width="0.8" fill="none"/>
<circle cx="1096" cy="433" r="0.9" fill="#221a3e"/><circle cx="1111" cy="433" r="0.9" fill="#221a3e"/>
<path d="M1096 428Q1103.5 425 1111 428" stroke="#00a3c4" stroke-width="0.9" fill="none"/>
<circle cx="1107.5" cy="401" r="2.3" fill="#3ad4f2"/>
<path d="M1112.5 403.5Q1117 406 1117.5 410.5" stroke="#3ad4f2" stroke-width="3" fill="none" stroke-linecap="round"/>
<path d="M1096 388Q1103 385 1110 388M1099 381Q1103 379 1107 381" stroke="#3ad4f2" stroke-width="1" fill="none"/>
<path d="M1122 383Q1135 365 1162 365Q1185 366 1198 385" stroke="#10c8e8" stroke-width="1.8" fill="none" stroke-dasharray="4.5 3"/>
<path d="M1185 386H1198V373" stroke="#10c8e8" stroke-width="1.8" fill="none" stroke-dasharray="4 2"/>
<path d="M1109 382L1121 389L1116 390L1119 396L1116 397L1113 391L1109 394Z" fill="#fff" stroke="#10c8e8" stroke-width="1.2"/>
</svg>
<div class="a" style="left:2px;top:667px;width:1342px;height:1px;background:#cfcfd8"></div>
<div class="a" style="left:14px;top:686px;width:16px;height:16px;border:2px solid #8f8f9d;border-radius:3px;background:#fff"></div>
<div class="a" style="left:37px;top:688px;font-size:12.5px;letter-spacing:-0.45px;color:#15141a;white-space:nowrap">Titelleiste</div>
<div class="a" style="left:95px;top:679px;width:111px;height:31px;background:#e0e0e6;border-radius:4px"></div>
<div class="a" style="left:107px;top:688px;font-size:12.5px;letter-spacing:-0.45px;color:#15141a;white-space:nowrap">Symbolleisten</div>
<svg class="a" style="left:184px;top:692px" width="9" height="6" viewBox="0 0 9 6"><path d="M0.5 1L4.5 5L8.5 1" stroke="#15141a" stroke-width="1" fill="none"/></svg>
<div class="a" style="left:214px;top:679px;width:71px;height:31px;background:#f0f0f4;border-radius:4px"></div>
<div class="a" style="left:226px;top:688px;font-size:12.5px;letter-spacing:-0.45px;color:#15141a;white-space:nowrap">Dichte</div>
<svg class="a" style="left:262px;top:692px" width="9" height="6" viewBox="0 0 9 6"><path d="M0.5 1L4.5 5L8.5 1" stroke="#15141a" stroke-width="1" fill="none"/></svg>
<div class="a" style="left:291px;top:688px;font-size:12.5px;letter-spacing:-0.45px;color:#0061e0;white-space:nowrap;text-decoration:underline">Themes verwalten</div>
<div class="a" style="left:1123px;top:678px;width:161px;height:32px;background:#ebebef;border-radius:4px"></div>
<div class="a" style="left:1135px;top:688px;font-size:12.5px;letter-spacing:-0.45px;color:#15141a;white-space:nowrap">Standard wiederherstellen</div>
<div class="a" style="left:1292px;top:678px;width:52px;height:32px;background:#0061e0;border-radius:4px"></div>
<div class="a" style="left:1305px;top:688px;font-size:12.5px;letter-spacing:-0.45px;color:#fff;white-space:nowrap">Fertig</div>
<div class="a" style="left:95px;top:610px;width:232px;height:68px;background:#0000ff;border-radius:4px"></div>
<svg class="a" style="left:113px;top:619px" width="12" height="10" viewBox="0 0 12 10"><path d="M1 5L4.5 8.5L11 1.5" stroke="#8080ff" stroke-width="1.3" fill="none"/></svg>
<svg class="a" style="left:113px;top:659px" width="12" height="10" viewBox="0 0 12 10"><path d="M1 5L4.5 8.5L11 1.5" stroke="#8080ff" stroke-width="1.3" fill="none"/></svg>
<div class="a" style="left:135px;top:615px;font-size:12.5px;letter-spacing:-0.45px;line-height:20px;color:#fff;white-space:nowrap"><u>M</u>enüleiste<br><u>L</u>esezeichen-Symbolleiste<br>Vertical Add-on Bar (NULL)</div>
<svg class="a" style="left:295px;top:637px" width="16" height="14" viewBox="0 0 16 14"><path d="M0 4H8V0L15 7L8 14V10H0Z" fill="#ff0000"/></svg>
<div class="a" style="left:0;top:0;width:1px;height:719px;background:#000"></div>
<div class="a" style="left:0;top:0;width:1px;height:43px;background:#d8d8d8"></div>
<div class="a" style="left:1px;top:0;width:1px;height:719px;background:#008000"></div>
<svg class="a" style="left:0;top:709px" width="10" height="10" viewBox="0 0 10 10"><path d="M0 0H2V4Q2.5 9.5 8 10H0Z" fill="#000"/><path d="M1.5 0V4Q2 9.5 7.5 10.2" stroke="#008000" stroke-width="1" fill="none"/></svg>
</body></html>
